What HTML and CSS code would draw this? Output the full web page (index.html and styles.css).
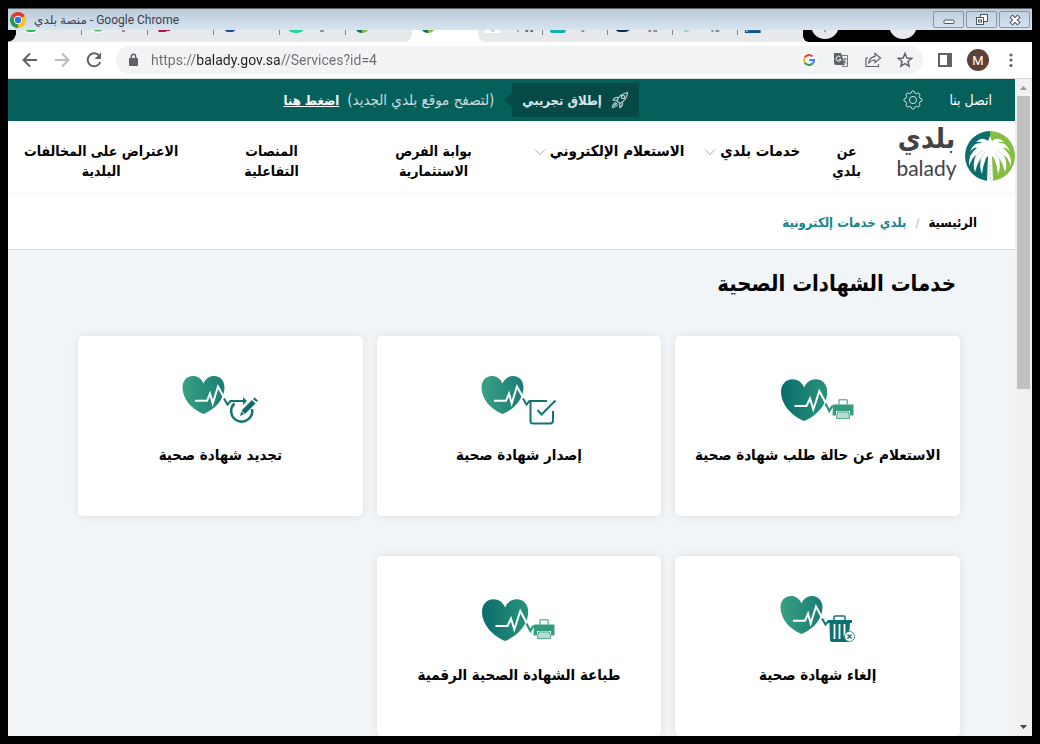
FILE: index.html
```html
<!DOCTYPE html>
<html lang="en">
<head>
<meta charset="utf-8">
<title>منصة بلدي</title>
<link rel="stylesheet" href="styles.css">
</head>
<body>
<svg class="defs" aria-hidden="true">
  <defs>
    <linearGradient id="dark-light"><stop offset="0" stop-color="#0b6c6d"/><stop offset="1" stop-color="#2a937a"/></linearGradient>
    <linearGradient id="light-dark"><stop offset="0" stop-color="#39a181"/><stop offset="1" stop-color="#1a7c76"/></linearGradient>
    <path id="heart" d="M21.500 9.500C23.500 4.500 27.500 2 32 2C38.500 2 42.500 7 42.500 13.500C42.500 25 33 35.500 21.500 40C10 35.500.5 25 .5 13.500C.5 7 4.500 2 11 2C15.500 2 19.500 4.500 21.500 9.500Z"/>
    <g id="heart-small">
      <use href="#heart" fill="url(#light-dark)"/>
      <path d="M13 26.700H25L28 19.500L30.700 29.500L36 12.500L42.500 24.500" fill="none" stroke="#fff" stroke-width="2"/>
    </g>
    <g id="print">
      <use href="#heart" fill="url(#dark-light)" transform="translate(.5 3) scale(1.100)"/>
      <path d="M14.500 32H26.500L30 24.500L33.300 35.500L39.300 17L45.500 28.500" fill="none" stroke="#fff" stroke-width="2"/>
      <path d="M45.500 29.500L49.300 37L52 32.500H57" fill="none" stroke="#2c937a" stroke-width="2.200"/>
      <path d="M53 30.500H73.500V41.500H70V37H56V41.500H52.500Z" fill="#339c7f"/>
      <path d="M59 30.500V25.800H67.200V30.500" fill="none" stroke="#339c7f"/>
      <path d="M57.500 38H68.500L69.500 44.300H56.500Z" fill="#d7ece5" stroke="#339c7f"/>
      <path d="M58.500 40H67.500M58.500 42H67.500" stroke="#8ac5b3" stroke-width=".8"/>
    </g>
  </defs>
</svg>

<div class="window">
  <header class="titlebar">
    <svg class="chrome-logo" viewBox="0 0 16 16" aria-hidden="true">
      <path d="M8 8L1.100 4A8 8 0 0 1 14.900 4Z" fill="#e2392d"/>
      <path d="M8 8V16A8 8 0 0 1 1.100 4Z" fill="#23974a"/>
      <path d="M8 8L14.900 4A8 8 0 0 1 8 16Z" fill="#fbc116"/>
      <circle cx="8" cy="8" r="4.200" fill="#fff"/><circle cx="8" cy="8" r="3.200" fill="#2a75e8"/>
    </svg>
    <p class="window-title"><bdi>منصة بلدي</bdi> - Google Chrome</p>
    <div class="window-buttons">
      <button type="button" aria-label="Minimize"><svg viewBox="0 0 14 14"><rect x="2" y="7" width="10" height="3.500" rx="1" fill="#fff" stroke="#4c5468"/></svg></button>
      <button type="button" aria-label="Restore"><svg viewBox="0 0 14 14"><rect x="5.500" y="1.500" width="7" height="7" fill="#fff" stroke="#4c5468"/><rect x="1.500" y="4.500" width="7" height="7" fill="#fff" stroke="#4c5468"/><rect x="3.500" y="7" width="3" height="2" fill="none" stroke="#4c5468"/></svg></button>
      <button type="button" aria-label="Close"><svg viewBox="0 0 14 14"><path d="M3 3L11 11M11 3L3 11" stroke="#4c5468" stroke-width="4.400"/><path d="M3.600 3.600L10.400 10.400M10.400 3.600L3.600 10.400" stroke="#fff" stroke-width="2.200"/></svg></button>
    </div>
  </header>

  <div class="tabstrip">
    <span class="strip-start"></span>
    <svg class="tab" viewBox="0 0 66 12"><ellipse cx="15" cy="0" rx="7" ry="3.500" fill="#fff"/><ellipse cx="15" cy="0" rx="5" ry="2" fill="#1fc155"/></svg>
    <svg class="tab" viewBox="0 0 66 12"><ellipse cx="16" cy="0" rx="7" ry="3" fill="#fff"/><ellipse cx="16" cy="0" rx="4" ry="1.500" fill="#54b86a"/><path d="M40 1H43" stroke="#777" stroke-width="1.500"/></svg>
    <svg class="tab" viewBox="0 0 66 12"><path d="M10 0H22V1L19 1L17 2H11Z" fill="#b3123f"/></svg>
    <svg class="tab" viewBox="0 0 66 12"><ellipse cx="16" cy="0" rx="5" ry="2" fill="#214a94"/></svg>
    <svg class="tab" viewBox="0 0 66 12"><ellipse cx="16" cy="0" rx="7" ry="3" fill="#1ed895"/><path d="M40 1H44" stroke="#777" stroke-width="1.500"/></svg>
    <svg class="tab tab-last" viewBox="0 0 66 12"><path d="M10 0H16V3Q12 3 10 0Z" fill="#0b6e6a"/><path d="M16 0H22Q20 3 16 3Z" fill="#87bd42"/></svg>
    <svg class="tab tab-active" viewBox="0 0 66 12"><path d="M10 0H16V3Q12 3 10 0Z" fill="#0b6e6a"/><path d="M16 0H22Q20 3 16 3Z" fill="#87bd42"/></svg>
    <svg class="tab tab-first" viewBox="0 0 66 12"><path d="M7 0H23V3H7Z" fill="#fff"/><circle cx="15" cy="0" r="2" fill="#ccc"/><path d="M40 1H41M48 1H51M53 1H56" stroke="#777" stroke-width="2"/></svg>
    <svg class="tab" viewBox="0 0 66 12"><path d="M7 0H23Q23 3 21 3H9Q7 3 7 0Z" fill="#12b3ae"/><path d="M39 1H42" stroke="#777" stroke-width="1.500"/></svg>
    <svg class="tab" viewBox="0 0 66 12"><path d="M8 0H22Q20 2 17 2H12Q9 2 8 0Z" fill="#14264d"/><path d="M41 1H44M46 1H50" stroke="#9a8f92" stroke-width="2"/></svg>
    <svg class="tab" viewBox="0 0 66 12"><path d="M11 1H16" stroke="#58b79a"/><path d="M39 1H41M43 1H47" stroke="#7b8fa0" stroke-width="2"/></svg>
    <svg class="tab tab-end" viewBox="0 0 66 12"><path d="M7 0H23V3H7Z" fill="#0b5590"/><path d="M8 1H10" stroke="#fff"/></svg>
    <svg class="strip-end" viewBox="0 0 229 12" preserveAspectRatio="xMinYMin"><circle cx="22" cy="-5" r="14" fill="#e8e9ed"/><path d="M21 1H23" stroke="#666"/><circle cx="100" cy="-5" r="14" fill="#e8e9ed"/></svg>
  </div>

  <div class="toolbar">
    <div class="history">
      <button type="button" class="tool" aria-label="Back"><svg viewBox="0 0 20 20"><path d="M17 10H4M10 3.500L3.500 10L10 16.500" fill="none" stroke="#5f6368" stroke-width="2"/></svg></button>
      <button type="button" class="tool" aria-label="Forward"><svg viewBox="0 0 20 20"><path d="M3 10H16M10 3.500L16.500 10L10 16.500" fill="none" stroke="#b9bbbe" stroke-width="2"/></svg></button>
      <button type="button" class="tool" aria-label="Reload"><svg viewBox="0 0 20 20"><path d="M15.500 6A6.500 6.500 0 1 0 16.300 12" fill="none" stroke="#5f6368" stroke-width="2"/><path d="M17 2.500V9H10.500Z" fill="#5f6368"/></svg></button>
    </div>
    <div class="omnibox">
      <svg class="lock" viewBox="0 0 10 14" aria-hidden="true"><rect x="0" y="5" width="9" height="8" rx="1" fill="#5f6368"/><path d="M2.300 5V3.500A2.200 2.200 0 0 1 6.700 3.500V5" fill="none" stroke="#5f6368" stroke-width="1.400"/></svg>
      <input class="url" type="text" aria-label="Address" value="https://balady.gov.sa//Services?id=4">
      <button type="button" class="tool" aria-label="Google"><svg viewBox="0 0 20 20"><circle cx="10" cy="10" r="8" fill="#fff"/><g fill="none" stroke-width="2.200"><path d="M5.700 7.500A5 5 0 0 1 13.500 6.400" stroke="#ea4335"/><path d="M5.700 7.500A5 5 0 0 0 5.700 12.500" stroke="#fbbc05"/><path d="M5.700 12.500A5 5 0 0 0 13.500 13.600" stroke="#34a853"/><path d="M13.500 13.600A5 5 0 0 0 15 10.200H10.200" stroke="#4285f4"/></g></svg></button>
      <button type="button" class="tool" aria-label="Translate"><svg viewBox="0 0 20 20"><path d="M3 3H10L14 15H5Q3 15 3 13Z" fill="#5f6368"/><path d="M11 5.500H16.500V16.500H11.500L10.500 14" fill="none" stroke="#777a7e"/><path d="M9.500 7A2.500 2.500 0 1 0 10 9.500H7.800" fill="none" stroke="#fff"/><path d="M12 9H16M14 8V9Q14.500 12 12.500 13.500M13 11L15.500 13.500" fill="none" stroke="#777a7e"/></svg></button>
      <button type="button" class="tool" aria-label="Share"><svg viewBox="0 0 20 20"><path d="M5 8H3V16.500H15.500V14M12 3.500L17.500 8L12 12.500V10Q8 10 5.500 13.500Q6.500 7 12 6.300Z" fill="none" stroke="#5f6368" stroke-width="1.200"/></svg></button>
      <button type="button" class="tool" aria-label="Bookmark"><svg viewBox="0 0 20 20"><path d="M10 3.500L11.900 8L16.700 8.400L13 11.500L14.100 16.200L10 13.700L5.900 16.200L7 11.500L3.300 8.400L8.100 8Z" fill="none" stroke="#5f6368" stroke-width="1.500"/></svg></button>
    </div>
    <button type="button" class="tool" aria-label="Side panel"><svg viewBox="0 0 20 20"><path d="M3 3H17V17H3ZM5 5V15H12V5Z" fill="#5f6368" fill-rule="evenodd"/></svg></button>
    <button type="button" class="avatar" aria-label="Profile">M</button>
    <button type="button" class="tool" aria-label="Menu"><svg viewBox="0 0 20 20"><g fill="#5f6368"><circle cx="10" cy="5" r="1.600"/><circle cx="10" cy="10" r="1.600"/><circle cx="10" cy="15.500" r="1.600"/></g></svg></button>
  </div>

  <div class="viewport">
    <div class="page" lang="ar" dir="rtl">
      <div class="topbar">
        <a class="contact" href="#contact">اتصل بنا</a>
        <button type="button" class="gear" aria-label="الإعدادات"><svg viewBox="0 0 20 20"><g fill="none" stroke="#cfe0df"><circle cx="10" cy="10" r="3.600"/><path d="M8.200 3Q8.500 .8 10 .8Q11.500 .8 11.800 3L13.500 3.700Q15.300 2.400 16.400 3.500Q17.600 4.700 16.300 6.500L17 8.200Q19.200 8.500 19.200 10Q19.200 11.500 17 11.800L16.300 13.500Q17.600 15.300 16.400 16.400Q15.300 17.600 13.500 16.300L11.800 17Q11.500 19.200 10 19.200Q8.500 19.200 8.200 17L6.500 16.300Q4.700 17.600 3.500 16.400Q2.400 15.300 3.700 13.500L3 11.800Q.8 11.500 .8 10Q.8 8.500 3 8.200L3.700 6.500Q2.400 4.700 3.500 3.500Q4.700 2.400 6.500 3.700Z"/></g></svg></button>
        <div class="launch">
          <strong class="badge"><svg viewBox="0 0 18 18" aria-hidden="true"><g fill="none" stroke="#b9cfce" stroke-width="1.200"><path d="M6 10Q8 3 16.500 1.500Q16 9 9 12.500Z"/><circle cx="12" cy="6" r="1.700"/><path d="M7 6.500Q4 5.500 2 9L5.800 9.500M11.500 11.500Q12 14.500 9 16.500L8.500 13M5 11.500Q2 12 1.500 16.500Q6 16 6.500 13.500M3 15L6 12"/></g></svg>إطلاق تجريبي</strong>
          <span class="launch-note">(لتصفح موقع بلدي الجديد)</span>
          <a class="launch-link" href="#new">اضغط هنا</a>
        </div>
      </div>

      <div class="mainbar">
        <a class="brand" href="#home" aria-label="بلدي balady">
          <svg viewBox="0 0 50 50" aria-hidden="true">
            <path d="M25 0A25 25 0 0 0 25 50Z" fill="#0b706b"/><path d="M25 0A25 25 0 0 1 25 50Z" fill="#87bd42"/>
            <path d="M25 5L27 10Q33 5 39 11Q35 10 33 12Q42 11 45 21Q41 16 38 17Q47 23 46 35Q43 27 39 24Q43 33 40 41Q38 33 34 27Q36 36 33 43Q32 34 29 27L27 25L28 50H22L23 25L21 27Q18 34 17 43Q14 36 16 27Q12 33 10 41Q7 33 11 24Q7 27 4 35Q3 23 12 17Q9 16 5 21Q8 11 17 12Q15 10 11 11Q17 5 23 10Z" fill="#fff"/>
            <path d="M30 21L38 33M32 19L43 29M20 21L12 33M18 19L7 29" stroke="#0b706b" stroke-opacity=".25" stroke-width=".8"/>
            <path d="M25 34V50" stroke="#a9cbb0" stroke-width="1" stroke-dasharray="2 2"/>
          </svg>
          <span class="brand-text"><span class="brand-ar">بلدي</span><span class="brand-en" dir="ltr">balady</span></span>
        </a>
        <nav class="menu">
          <a href="#about">عن<br>بلدي</a>
          <a class="drop" href="#services">خدمات بلدي<svg viewBox="0 0 12 8" aria-hidden="true"><path d="M1 1.500L6 6.500L11 1.500" fill="none" stroke="#aaa"/></svg></a>
          <a class="drop" href="#query">الاستعلام الإلكتروني<svg viewBox="0 0 12 8" aria-hidden="true"><path d="M1 1.500L6 6.500L11 1.500" fill="none" stroke="#aaa"/></svg></a>
          <a class="invest" href="#invest">بوابة الفرص<br>الاستثمارية</a>
          <a class="platforms" href="#platforms">المنصات<br>التفاعلية</a>
          <a class="objection" href="#objection">الاعتراض على المخالفات<br>البلدية</a>
        </nav>
      </div>

      <nav class="crumbs">
        <a class="crumb-home" href="#home">الرئيسية</a><span class="slash">/</span><span class="crumb-here">بلدي خدمات إلكترونية</span>
      </nav>

      <main class="content">
        <h1>خدمات الشهادات الصحية</h1>
        <div class="cards">
          <a class="card" href="#status"><svg viewBox="0 0 76 52" aria-hidden="true"><use href="#print"/></svg><span>الاستعلام عن حالة طلب شهادة صحية</span></a>
          <a class="card" href="#issue"><svg viewBox="0 0 76 52" aria-hidden="true"><use href="#heart-small"/><g fill="none" stroke="#147472" stroke-width="2"><path d="M42 24.500L45.500 30.500L48.500 27H66"/><path d="M49.500 27V47Q49.500 49.500 52 49.500H69Q72 49.500 72 46.500V37"/><path d="M56.500 36L60.500 40.500L74.500 26.500"/></g></svg><span>إصدار شهادة صحية</span></a>
          <a class="card" href="#renew"><svg viewBox="0 0 76 52" aria-hidden="true"><use href="#heart-small"/><g fill="none" stroke="#147472" stroke-width="2"><path d="M42 24.500L45.500 30.500L48.500 27H63"/><path d="M52.500 29.500A10.500 10.500 0 1 0 70 35" stroke-width="2.500"/></g><path d="M61 23L65 27L61 31Z" fill="#147472"/><path d="M60 36L70 26L73.500 29.500L63.500 39.500L58 42Z" fill="#0d6e70"/><path d="M71 25L72.500 23.500L76 26.500L74.500 28Z" fill="#0d6e70"/><path d="M59.500 37L62.500 40" stroke="#fff"/></svg><span>تجديد شهادة صحية</span></a>
          <a class="card" href="#cancel"><svg viewBox="0 0 76 52" aria-hidden="true"><use href="#heart-small"/><g fill="none" stroke="#147472" stroke-width="2"><path d="M42 24.500L45.500 30.500L48.500 27H52"/><path d="M54 26V23Q54 22 55 22H64Q65 22 65 23V26" stroke-width="1.500"/></g><path d="M48 26H72V29H70L68.500 48H52Q50 48 50 46L49.500 29H48Z" fill="#0f7071"/><path d="M54.500 30V45M59.500 30V45M64.500 30V42" stroke="#fff" stroke-width="1.800"/><circle cx="69.500" cy="42.500" r="5" fill="#fff" stroke="#3e8d8c"/><path d="M67.500 40.500L71.500 44.500M71.500 40.500L67.500 44.500" stroke="#147472" stroke-width="1.400"/></svg><span>إلغاء شهادة صحية</span></a>
          <a class="card" href="#printcard"><svg viewBox="0 0 76 52" aria-hidden="true"><use href="#print"/></svg><span>طباعة الشهادة الصحية الرقمية</span></a>
        </div>
      </main>
    </div>
    <div class="scrollbar" aria-hidden="true">
      <svg viewBox="0 0 17 17"><path d="M5 11L8.500 7L12 11Z" fill="#9b9b9b"/></svg>
      <div class="track"><div class="thumb"></div></div>
      <svg viewBox="0 0 17 17"><path d="M5 6L8.500 10L12 6Z" fill="#454545"/></svg>
    </div>
  </div>
</div>
</body>
</html>
```
FILE: styles.css
```css
* { box-sizing: border-box; }
body {
  margin: 0;
  padding: 8px;
  height: 100vh;
  background: #000;
  font-family: "DejaVu Sans Condensed", "DejaVu Sans", sans-serif;
  color: #000;
}
button { border: 0; padding: 0; background: none; font: inherit; }
a { color: inherit; text-decoration: none; }
svg { display: block; flex: none; }
.defs { position: absolute; width: 0; height: 0; }

.window { height: 100%; display: flex; flex-direction: column; overflow: hidden; }

.titlebar {
  flex: none;
  height: 22px;
  display: flex;
  align-items: center;
  gap: 8px;
  padding: 0 2px;
  border-top: 1px solid #5e6468;
  background: linear-gradient(#bccad8, #d7e5f3);
}
.chrome-logo { width: 16px; height: 16px; }
.window-title {
  flex: 1;
  margin: 0;
  font: 12px Roboto, "DejaVu Sans", sans-serif;
  color: #3c4249;
}
.window-buttons { display: flex; gap: 2px; }
.window-buttons button {
  width: 31px;
  height: 17px;
  display: grid;
  place-items: center;
  border: 1px solid #8594b0;
  border-radius: 2px;
  background: linear-gradient(#c3d0de, #d3e0ee);
}
.window-buttons svg { width: 14px; height: 14px; }

.tabstrip { flex: none; height: 12px; display: flex; background: #fff; overflow: hidden; }
.strip-start {
  flex: none;
  width: 8px;
  background:
    linear-gradient(#000, #000) 0 0 / 8px 5px no-repeat,
    radial-gradient(circle at 0 4px, #000 0 7px, #e8e9ed 8px);
}
.tab {
  width: 66px;
  height: 12px;
  background: linear-gradient(#85888c, #85888c) 100% 0 / 1px 5px no-repeat #e8e9ed;
}
.tab-last { background: #e8e9ed; border-bottom-right-radius: 8px; }
.tab-active { background: #fff; }
.tab-active ~ .tab { width: 65px; }
.tab-first { border-bottom-left-radius: 8px; }
.tab-end { background: #e8e9ed; }
.strip-end { flex: 1; height: 12px; background: #000; border-bottom-left-radius: 6px; }

.toolbar {
  flex: none;
  height: 37px;
  display: flex;
  align-items: center;
  gap: 12px;
  padding: 0 11px 0 12px;
  background: #fff;
  border-bottom: 1px solid #d5d6d8;
}
.history { flex: none; display: flex; gap: 12px; }
.tool { flex: none; width: 20px; height: 20px; }
.tool svg { width: 20px; height: 20px; }
.omnibox {
  flex: 1;
  min-width: 0;
  height: 28px;
  display: flex;
  align-items: center;
  gap: 12px;
  padding: 0 8px 0 13px;
  border-radius: 14px;
  background: #f1f3f4;
}
.lock { width: 10px; height: 14px; }
.url {
  flex: 1;
  min-width: 0;
  height: 24px;
  margin: 0;
  padding: 0;
  border: 0;
  font: 14px Roboto, sans-serif;
  color: transparent;
  background: linear-gradient(90deg, #6a6e73 45px, #202124 45px, #202124 129px, #6a6e73 129px);
  -webkit-background-clip: text;
  background-clip: text;
}
.avatar {
  flex: none;
  width: 22px;
  height: 22px;
  border-radius: 50%;
  background: #5d4037;
  color: #fff;
  font: 13px Roboto, sans-serif;
}

.viewport { flex: 1; min-height: 0; display: flex; background: #f1f5f8; overflow: hidden; }
.page { flex: 1; min-width: 0; overflow: hidden; }
.scrollbar { flex: none; width: 17px; display: flex; flex-direction: column; background: #f1f1f1; }
.scrollbar svg { width: 17px; height: 17px; }
.track { flex: 1; padding: 0 2px; }
.thumb { height: 47%; background: #c1c1c1; }

.topbar {
  height: 42px;
  display: flex;
  align-items: center;
  padding-right: 23px;
  background: #05605c;
  color: #fff;
  font-size: 13px;
  white-space: nowrap;
}
.contact { font-size: 14px; }
.gear { width: 20px; height: 20px; margin-right: 26px; }
.gear svg { width: 20px; height: 20px; }
.launch { display: flex; align-items: center; margin-right: auto; margin-left: 28%; }
.badge {
  position: relative;
  height: 34px;
  display: flex;
  align-items: center;
  gap: 9px;
  margin-left: 18px;
  padding: 0 10px;
  border-radius: 2px;
  background: #064a48;
  color: #d9e6e5;
}
.badge::after {
  content: "";
  position: absolute;
  left: -8px;
  top: 9px;
  border: 8px solid transparent;
  border-left: 0;
  border-right-color: #064a48;
}
.badge svg { width: 18px; height: 18px; }
.launch-note { color: #c9dcdb; margin-left: 8px; font-size: 15px; }
.launch-link { font-weight: bold; text-decoration: underline; }

.mainbar {
  height: 71px;
  display: flex;
  background: #fff;
  box-shadow: 0 2px 8px rgba(0, 0, 0, .03);
  position: relative;
}
.brand { flex: none; display: flex; gap: 8px; }
.brand svg { width: 50px; height: 50px; margin-top: 10px; }
.brand-text { width: 61px; display: flex; flex-direction: column; align-items: center; color: #424242; }
.brand-ar { padding-top: 1px; font-size: 28px; line-height: 33px; font-weight: bold; }
.brand-en { font: 21px/25px Lato, sans-serif; }
.menu {
  flex: 1;
  display: flex;
  gap: 20px;
  padding: 20px 35px 0 16px;
  font-size: 14px;
  font-weight: bold;
  line-height: 20px;
  text-align: center;
  white-space: nowrap;
}
.drop { display: flex; gap: 4px; font-size: 15px; }
.drop svg { width: 12px; height: 8px; margin-top: 7px; }
.menu a:first-child { margin-left: 12px; }
.invest { margin-right: 42px; }
.platforms { margin-right: auto; }
.objection { margin-right: 46px; }

.crumbs {
  height: 58px;
  display: flex;
  align-items: center;
  gap: 9px;
  padding: 4px 38px 0;
  background: #fff;
  border-bottom: 1px solid #d8dfe0;
  font-size: 13px;
  font-weight: bold;
}
.slash { color: #bbb; font-weight: normal; }
.crumb-here { color: #15868a; }

.content { padding: 16px 55px 0 70px; }
h1 { margin: 0 4px 34px; font-size: 22px; line-height: 36px; font-weight: bold; }
.cards { display: grid; grid-template-columns: repeat(3, 1fr); gap: 40px 14px; }
.card {
  height: 180px;
  display: flex;
  flex-direction: column;
  align-items: center;
  gap: 16px;
  padding-top: 38px;
  border-radius: 5px;
  background: #fff;
  box-shadow: 0 0 10px rgba(0, 0, 0, .09);
  font-size: 15px;
  font-weight: bold;
  line-height: 26px;
  white-space: nowrap;
}
.card svg { width: 76px; height: 52px; }
```
